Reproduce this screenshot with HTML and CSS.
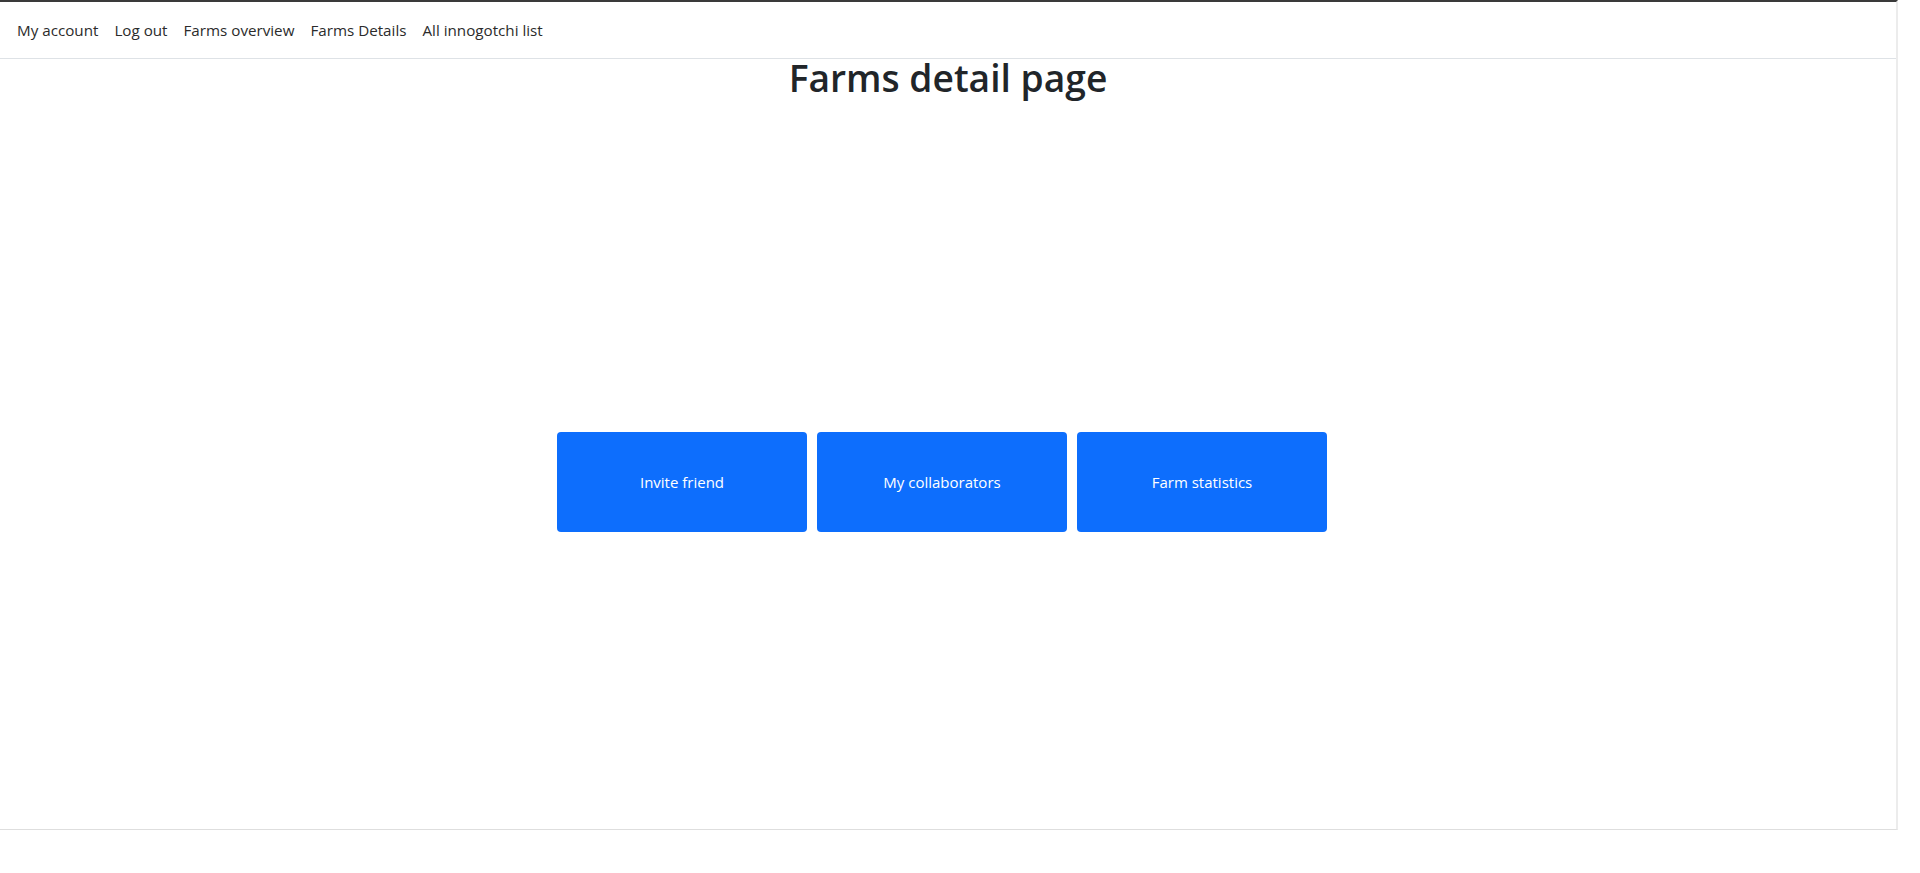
FILE: index.html
```html
<!DOCTYPE html>
<html lang="en">
<head>
<meta charset="utf-8">
<title>Farms detail page</title>
<link rel="stylesheet" href="styles.css">
</head>
<body>
<div class="frame">
  <nav class="navbar">
    <a class="nav-link" href="#">My account</a>
    <a class="nav-link" href="#">Log out</a>
    <a class="nav-link" href="#">Farms overview</a>
    <a class="nav-link" href="#">Farms Details</a>
    <a class="nav-link" href="#">All innogotchi list</a>
  </nav>
  <main class="content">
    <h1 class="title">Farms detail page</h1>
    <div class="actions">
      <button class="btn">Invite friend</button>
      <button class="btn">My collaborators</button>
      <button class="btn">Farm statistics</button>
    </div>
  </main>
</div>
</body>
</html>
```

FILE: styles.css
```css
html, body {
  margin: 0;
  padding: 0;
  background: #ffffff;
}

body {
  font-family: "Open Sans", "Noto Sans", sans-serif;
  color: #212529;
  width: 1920px;
  height: 873px;
  overflow: hidden;
}

.frame {
  width: 1896px;
  height: 827px;
  border-top: 2px solid #3a3a3a;
  border-right: 2px solid #ececec;
  border-bottom: 1px solid #dedede;
  display: flex;
  flex-direction: column;
}

.navbar {
  display: flex;
  align-items: center;
  height: 56px;
  padding: 0 0 0 9px;
  border-bottom: 1px solid #dee2e6;
}

.nav-link {
  font-size: 15.2px;
  color: #2b2b2b;
  text-decoration: none;
  padding: 0 8px;
  line-height: 24px;
}

.content {
  display: flex;
  flex-direction: column;
  align-items: center;
}

.title {
  margin: 0;
  font-size: 37.2px;
  font-weight: 600;
  line-height: 38px;
  color: #212529;
}

.actions {
  display: flex;
  justify-content: center;
  padding-top: 335px;
  padding-right: 12px;
  gap: 10px;
}

.btn {
  width: 250px;
  height: 100px;
  background: #0d6efd;
  color: #ffffff;
  border: none;
  border-radius: 4px;
  font-family: "Open Sans", "Noto Sans", sans-serif;
  font-size: 15px;
  cursor: pointer;
}
```
